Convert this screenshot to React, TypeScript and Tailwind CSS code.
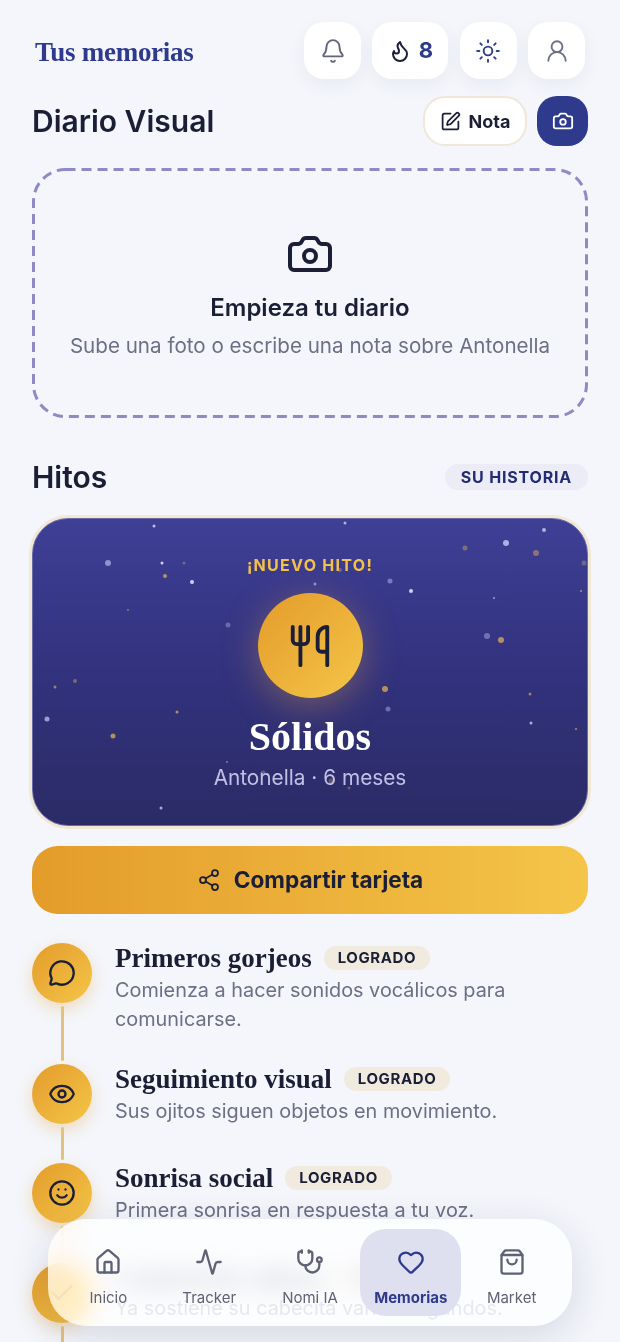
import {
  Activity,
  Bell,
  Camera,
  Check,
  Eye,
  Flame,
  Heart,
  House,
  MessageCircle,
  Share2,
  ShoppingBag,
  Smile,
  SquarePen,
  Stethoscope,
  Sun,
  UserRound,
  Utensils,
} from 'lucide-react';
import type { LucideIcon } from 'lucide-react';

const SANS = 'font-["Inter","Liberation_Sans",sans-serif]';
const SERIF = 'font-["Liberation_Serif",serif]';

// x, y relative to the card, radius, colour, opacity
const STARS: [number, number, number, string, number][] = [
  [121, 7, 1.5, '#c9cdf5', 0.9],
  [75, 44, 3, '#c9cdf5', 0.6],
  [129, 44, 1.5, '#dfe2ff', 0.9],
  [151, 44, 1.5, '#c9b77c', 0.4],
  [132, 57, 2, '#e8b85a', 0.7],
  [159, 63, 2, '#dfe2ff', 0.9],
  [95, 91, 1, '#e8b85a', 0.5],
  [195, 106, 2.5, '#c9cdf5', 0.35],
  [22, 168, 1.5, '#e8b85a', 0.6],
  [42, 162, 2, '#e8b85a', 0.4],
  [144, 193, 1.5, '#e8b85a', 0.7],
  [14, 200, 2.5, '#c9cdf5', 0.7],
  [80, 217, 2.5, '#e8b85a', 0.7],
  [194, 243, 1, '#c9cdf5', 0.5],
  [230, 254, 2.5, '#c9cdf5', 0.3],
  [128, 289, 1.5, '#c9cdf5', 0.8],
  [312, 4, 1.5, '#c9cdf5', 0.8],
  [511, 11, 2, '#c9cdf5', 0.8],
  [473, 24, 3, '#c9cdf5', 0.8],
  [432, 29, 2.5, '#e8b85a', 0.4],
  [503, 34, 3, '#e8b85a', 0.45],
  [551, 44, 2.5, '#c9b77c', 0.35],
  [307, 51, 2, '#c9cdf5', 0.3],
  [357, 62, 2.5, '#c9cdf5', 0.45],
  [282, 65, 1.5, '#c9cdf5', 0.6],
  [378, 72, 2, '#dfe2ff', 0.9],
  [548, 72, 1, '#e8b85a', 0.7],
  [461, 79, 1, '#c9cdf5', 0.7],
  [454, 117, 3, '#c9cdf5', 0.4],
  [468, 121, 3, '#e8b85a', 0.7],
  [352, 170, 3, '#e8b85a', 0.7],
  [355, 190, 2.5, '#c9cdf5', 0.4],
  [497, 175, 1.5, '#e8b85a', 0.6],
  [498, 204, 1.5, '#c9cdf5', 0.8],
  [543, 210, 1, '#e8b85a', 0.7],
  [298, 262, 2.5, '#e8b85a', 0.3],
  [316, 269, 1.5, '#e8b85a', 0.35],
];

const HITOS = [
  {
    icon: MessageCircle,
    title: 'Primeros gorjeos',
    text: 'Comienza a hacer sonidos vocálicos para comunicarse.',
    height: 'h-[121px]',
  },
  {
    icon: Eye,
    title: 'Seguimiento visual',
    text: 'Sus ojitos siguen objetos en movimiento.',
    height: 'h-[99px]',
  },
  {
    icon: Smile,
    title: 'Sonrisa social',
    text: 'Primera sonrisa en respuesta a tu voz.',
    height: 'h-[100px]',
  },
];

const NAV: { icon: LucideIcon; label: string; active?: boolean }[] = [
  { icon: House, label: 'Inicio' },
  { icon: Activity, label: 'Tracker' },
  { icon: Stethoscope, label: 'Nomi IA' },
  { icon: Heart, label: 'Memorias', active: true },
  { icon: ShoppingBag, label: 'Market' },
];

function HeaderButton({ children, wide }: { children: React.ReactNode; wide?: boolean }) {
  return (
    <div
      className={`flex h-[57px] items-center justify-center gap-[7px] rounded-[20px] bg-white shadow-[0_6px_18px_rgba(40,45,90,0.06)] ${
        wide ? 'w-[76px]' : 'w-[57px]'
      }`}
    >
      {children}
    </div>
  );
}

function Badge() {
  return (
    <span className="rounded-full bg-[#f1ebdf] px-[14px] py-[3px] text-[15px] leading-[18px] font-bold tracking-[0.04em] text-[#1a1f36]">
      LOGRADO
    </span>
  );
}

function Dot({ children }: { children: React.ReactNode }) {
  return (
    <div className="flex h-[60px] w-[60px] shrink-0 items-center justify-center rounded-full bg-gradient-to-br from-[#e39c2a] to-[#f4c548] shadow-[0_6px_16px_rgba(227,156,42,0.3)]">
      {children}
    </div>
  );
}

export default function App() {
  return (
    <div className={`h-screen overflow-hidden bg-[#f4f6fb] px-8 pt-[22px] ${SANS}`}>
      <header className="flex items-center justify-between px-[3px]">
        <h1 className={`mt-[3px] text-[27px] font-bold tracking-[-0.01em] text-[#2e3a8c] ${SERIF}`}>Tus memorias</h1>
        <div className="flex gap-[11.33px]">
          <HeaderButton>
            <Bell size={26} strokeWidth={1.75} className="text-[#63667a]" />
          </HeaderButton>
          <HeaderButton wide>
            <Flame size={24} strokeWidth={2} className="text-[#1a1f36]" />
            <span className="text-[22px] font-bold text-[#2e3a8c]">8</span>
          </HeaderButton>
          <HeaderButton>
            <Sun size={26} strokeWidth={1.75} className="text-[#2e3a8c]" />
          </HeaderButton>
          <HeaderButton>
            <UserRound size={26} strokeWidth={1.75} className="text-[#6b7085]" />
          </HeaderButton>
        </div>
      </header>

      <div className="mt-[17px] flex items-center justify-between">
        <h2 className="text-[30px] font-semibold text-[#1a1f36]">Diario Visual</h2>
        <div className="flex gap-[10px]">
          <button className="flex h-[50px] w-[104px] items-center justify-center gap-2 rounded-[22px] border-2 border-[#eee8d8] bg-white text-[18px] font-bold text-[#1a1f36]">
            <SquarePen size={21} strokeWidth={2} />
            Nota
          </button>
          <button className="flex h-[50px] w-[51px] items-center justify-center rounded-[20px] bg-[#2e3a8c] text-white">
            <Camera size={22} strokeWidth={2} />
          </button>
        </div>
      </div>

      <section className="relative mt-[22px] flex h-[250px] flex-col items-center pt-[62px]">
        {/* chrome's dashed border comes out too short, so the dashes are drawn */}
        <svg className="absolute inset-0 h-full w-full" aria-hidden="true">
          <rect
            x="1.5"
            y="1.5"
            width="553"
            height="247"
            rx="32"
            fill="none"
            stroke="#8e8bc4"
            strokeWidth="3"
            strokeDasharray="10 6"
          />
        </svg>
        <Camera size={48} strokeWidth={2} className="text-[#1a1f36]" />
        <h3 className="mt-[12px] text-[24px] leading-[36px] font-semibold text-[#1a1f36]">Empieza tu diario</h3>
        <p className="mt-[5px] text-[20.6px] leading-[30px] text-[#6b7085]">
          Sube una foto o escribe una nota sobre Antonella
        </p>
      </section>

      <div className="mt-[41px] flex items-center justify-between">
        <h2 className="text-[30px] leading-[36px] font-semibold text-[#1a1f36]">Hitos</h2>
        <span className="rounded-full bg-[#ebecf5] px-4 py-[2px] text-[16px] leading-[22px] font-bold tracking-[0.05em] text-[#232c72]">
          SU HISTORIA
        </span>
      </div>

      <section className="relative mt-[23px] flex h-[308px] flex-col items-center overflow-hidden rounded-[36px] border border-[#6a6aa8] bg-gradient-to-b from-[#3f3f96] via-[#32327e] to-[#2b2b66] shadow-[0_0_0_3px_#f1e8d6]">
        <svg className="absolute inset-0 h-full w-full blur-[0.5px]" aria-hidden="true">
          {STARS.map(([x, y, r, fill, opacity]) => (
            <circle key={`${x}-${y}`} cx={x} cy={y} r={r} fill={fill} opacity={opacity} />
          ))}
        </svg>
        <p className="relative mt-[36px] text-[16px] leading-5 font-bold tracking-[0.08em] text-[#f4c14a]">
          ¡NUEVO HITO!
        </p>
        <div className="relative mt-[18px] flex h-[105px] w-[105px] items-center justify-center rounded-full bg-gradient-to-br from-[#e39c2a] to-[#f4c548] shadow-[0_8px_36px_rgba(240,170,60,0.35)]">
          <Utensils size={46} strokeWidth={2} className="text-[#1a1f36]" />
        </div>
        <h3 className={`relative mt-[15px] text-[40px] leading-[48px] font-bold text-white ${SERIF}`}>Sólidos</h3>
        <p className="relative mt-[2px] text-[20.8px] leading-[30px] text-[#c1c0e4]">Antonella · 6 meses</p>
      </section>

      <button className="mt-5 flex h-[68px] w-full items-center justify-center gap-[13px] rounded-[26px] bg-gradient-to-r from-[#e39c2a] to-[#f4c548] text-[22.6px] font-bold text-[#1a1f36]">
        <Share2 size={24} strokeWidth={1.75} />
        Compartir tarjeta
      </button>

      <div className="mt-[29px]">
        {HITOS.map((hito) => (
          <div key={hito.title} className={`flex gap-[23px] ${hito.height}`}>
            <div className="flex flex-col items-center">
              <Dot>
                <hito.icon size={28} strokeWidth={2} className="text-[#1a1f36]" />
              </Dot>
              <div className="my-[3px] w-[3px] flex-1 rounded-full bg-[#e3c27f]" />
            </div>
            <div>
              <div className="flex items-center gap-3">
                <span className={`text-[27px] leading-[30px] font-bold text-[#1a1f36] ${SERIF}`}>{hito.title}</span>
                <Badge />
              </div>
              <p className="mt-[3px] text-[19.85px] leading-[29px] text-[#6b7085]">{hito.text}</p>
            </div>
          </div>
        ))}
        <div className="flex gap-[23px]">
          <div className="flex flex-col items-center">
            <Dot>
              <Check size={28} strokeWidth={2} className="relative z-20 text-[#1a1f36]/5" />
            </Dot>
            <div className="my-[3px] h-[40px] w-[3px] rounded-full bg-[#e3c27f]" />
          </div>
          <div>
            <div className="flex items-center gap-3">
              <span className={`text-[27px] leading-[30px] font-bold text-[#1a1f36] ${SERIF}`}>Control de cabeza</span>
              <Badge />
            </div>
            <p className="relative z-20 mt-[1px] text-[19.85px] leading-[29px] text-[#6b7085]/15">
              Ya sostiene su cabecita varios segundos.
            </p>
          </div>
        </div>
      </div>

      {/* glass sits under the faded row, the tabs go over it */}
      <div className="fixed bottom-4 left-12 z-10 h-[107px] w-[524px] rounded-[38px] bg-white/75 shadow-[0_10px_40px_rgba(30,35,80,0.14)] backdrop-blur-md backdrop-saturate-150" />
      <nav className="fixed bottom-4 left-12 z-30 grid h-[107px] w-[524px] grid-cols-5 px-[10px] py-[10px]">
        {NAV.map((item) => (
          <div
            key={item.label}
            className={`flex flex-col items-center rounded-[26px] pt-[19px] ${
              item.active ? 'bg-[#dfe0ef] text-[#2e3a8c]' : 'text-[#5f6275]'
            }`}
          >
            <item.icon size={28} strokeWidth={2} />
            <span className={`mt-[12px] text-[15px] leading-5 ${item.active ? 'font-bold' : 'font-normal'}`}>
              {item.label}
            </span>
          </div>
        ))}
      </nav>
    </div>
  );
}
